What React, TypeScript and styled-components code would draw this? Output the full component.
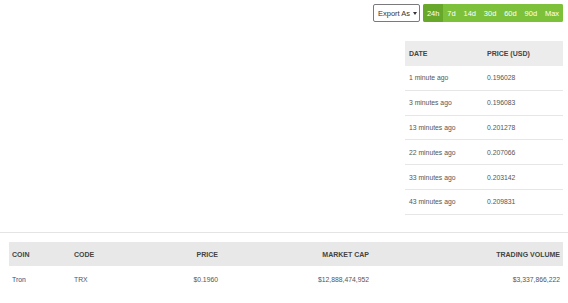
import React from "react";
import styled, { createGlobalStyle } from "styled-components";

const GlobalStyle = createGlobalStyle`
  body {
    margin: 0;
    background: #ffffff;
    font-family: "Liberation Sans", Arial, sans-serif;
    color: #555;
  }
`;

const ranges = ["24h", "7d", "14d", "30d", "60d", "90d", "Max"];

const history = [
  { date: "1 minute ago", price: "0.196028" },
  { date: "3 minutes ago", price: "0.196083" },
  { date: "13 minutes ago", price: "0.201278" },
  { date: "22 minutes ago", price: "0.207066" },
  { date: "33 minutes ago", price: "0.203142" },
  { date: "43 minutes ago", price: "0.209831" }
];

const App: React.FC = () => {
  return (
    <StPage>
      <GlobalStyle />
      <StToolbar>
        <StExportButton>
          Export As <StCaret />
        </StExportButton>
        <StRangeGroup>
          {ranges.map((r, i) => (
            <StRangeButton key={r} $active={i === 0}>
              {r}
            </StRangeButton>
          ))}
        </StRangeGroup>
      </StToolbar>

      <StChartArea>
        <StHistoryTable>
          <thead>
            <tr>
              <StHistoryHead>DATE</StHistoryHead>
              <StHistoryHead>PRICE (USD)</StHistoryHead>
            </tr>
          </thead>
          <tbody>
            {history.map((h) => (
              <tr key={h.date}>
                <StHistoryCell>{h.date}</StHistoryCell>
                <StHistoryCell>{h.price}</StHistoryCell>
              </tr>
            ))}
          </tbody>
        </StHistoryTable>
      </StChartArea>

      <StDivider />

      <StCoinTable>
        <thead>
          <tr>
            <StCoinHead $w="56px">COIN</StCoinHead>
            <StCoinHead $w="70px">CODE</StCoinHead>
            <StCoinHead $w="68px" $right>PRICE</StCoinHead>
            <StCoinHead $w="145px" $right>MARKET CAP</StCoinHead>
            <StCoinHead $right>TRADING VOLUME</StCoinHead>
          </tr>
        </thead>
        <tbody>
          <tr>
            <StCoinCell>
              <StCoinLink href="#">Tron</StCoinLink>
            </StCoinCell>
            <StCoinCell>TRX</StCoinCell>
            <StCoinCell $right>$0.1960</StCoinCell>
            <StCoinCell $right>$12,888,474,952</StCoinCell>
            <StCoinCell $right>$3,337,866,222</StCoinCell>
          </tr>
        </tbody>
      </StCoinTable>
    </StPage>
  );
};

export default App;

const StPage = styled.div`
  width: 568px;
  height: 303px;
  overflow: hidden;
  font-size: 8px;
`;

const StToolbar = styled.div`
  display: flex;
  justify-content: flex-end;
  align-items: center;
  gap: 3px;
  padding: 4px 5px 0 0;
`;

const StExportButton = styled.button`
  display: flex;
  align-items: center;
  gap: 3px;
  height: 18px;
  width: 47px;
  padding: 0 0 0 4px;
  border: 1px solid #7a7a7a;
  border-radius: 2px;
  background: #fff;
  color: #333;
  font-family: inherit;
  font-size: 7.5px;
  white-space: nowrap;
`;

const StCaret = styled.span`
  width: 0;
  height: 0;
  border-left: 2.5px solid transparent;
  border-right: 2.5px solid transparent;
  border-top: 3px solid #333;
`;

const StRangeGroup = styled.div`
  display: flex;
  height: 18px;
  width: 140px;
  border-radius: 2px;
  overflow: hidden;
  background: #7dc13a;
`;

const StRangeButton = styled.button<{ $active?: boolean }>`
  flex: 1 1 auto;
  padding: 0 2px;
  border: none;
  background: ${(p) => (p.$active ? "#67a82a" : "#7dc13a")};
  color: #fff;
  font-family: inherit;
  font-size: 7.5px;
  font-weight: 400;
`;

const StChartArea = styled.div`
  display: flex;
  justify-content: flex-end;
  align-items: flex-start;
  padding: 19px 5px 0 0;
  height: 191px;
`;

const StHistoryTable = styled.table`
  width: 158px;
  border-collapse: collapse;
`;

const StHistoryHead = styled.th`
  height: 25px;
  padding: 0 4px;
  background: #ececec;
  color: #444;
  font-size: 7px;
  font-weight: 700;
  text-align: left;
  &:first-child {
    width: 70px;
  }
`;

const StHistoryCell = styled.td`
  height: 23.8px;
  padding: 0 4px;
  border-bottom: 1px solid #e6e6e6;
  color: #555;
  font-size: 6.8px;
`;

const StDivider = styled.hr`
  margin: 0;
  border: none;
  border-top: 1px solid #e4e4e4;
`;

const StCoinTable = styled.table`
  width: 554px;
  margin: 9px 0 0 9px;
  border-collapse: collapse;
  table-layout: fixed;
`;

const StCoinHead = styled.th<{ $right?: boolean; $w?: string }>`
  height: 24px;
  padding: 0 3px;
  width: ${(p) => p.$w || "auto"};
  background: #e8e8e8;
  color: #444;
  font-size: 7px;
  font-weight: 700;
  text-align: ${(p) => (p.$right ? "right" : "left")};
`;

const StCoinCell = styled.td<{ $right?: boolean }>`
  height: 27px;
  padding: 0 3px;
  color: #555;
  font-size: 6.8px;
  text-align: ${(p) => (p.$right ? "right" : "left")};
`;

const StCoinLink = styled.a`
  color: #2a4f7c;
  text-decoration: none;
`;
